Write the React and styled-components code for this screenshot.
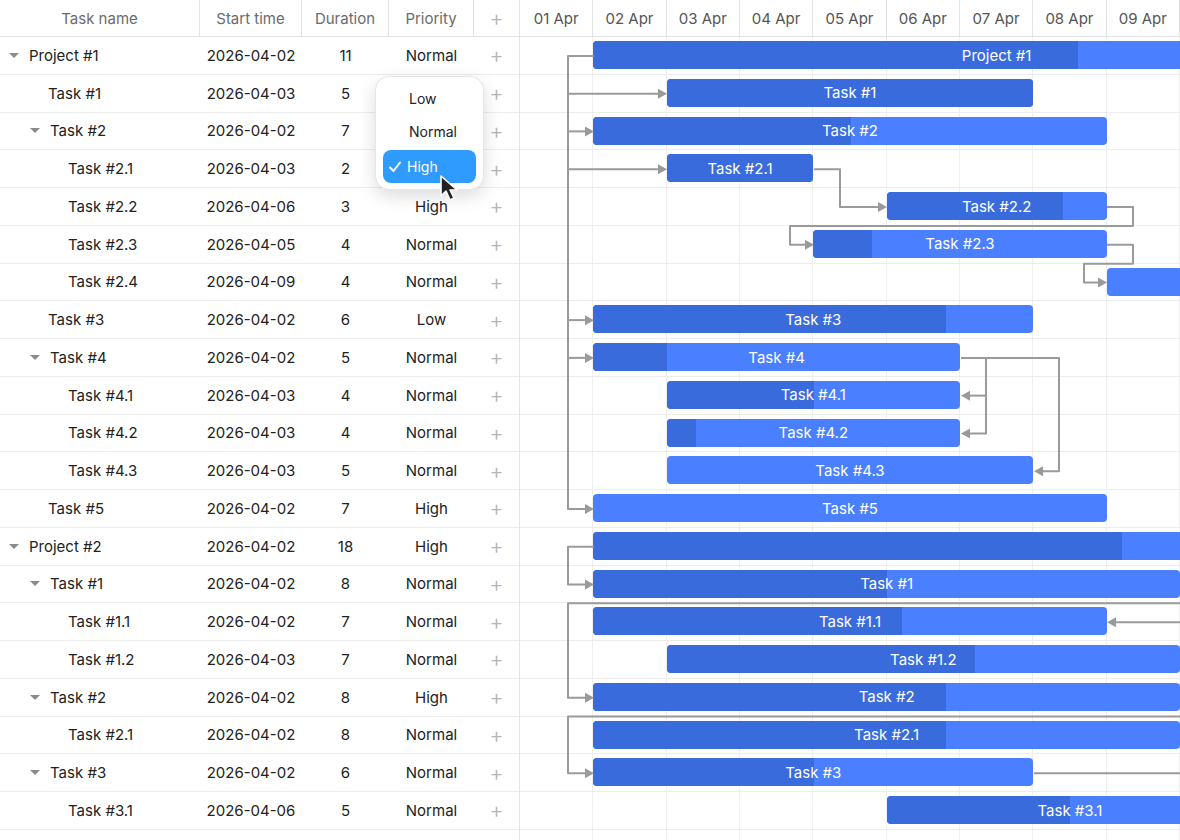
import React from "react";
import styled, { createGlobalStyle } from "styled-components";

const Global = createGlobalStyle`
  body { margin: 0; font-family: Inter, "Noto Sans", sans-serif; background: #fff; color: #222; }
`;

const DAY = 73.33;
const ROW = 37.75;
const HEAD = 37;
const dayX = (d) => (d - 1) * DAY;

const rows = [
  { name: "Project #1", lvl: 0, toggle: true, start: "2026-04-02", dur: 11, pr: "Normal", d: 2, prog: 1078 },
  { name: "Task #1", lvl: 1, start: "2026-04-03", dur: 5, pr: "", d: 3, prog: 1034 },
  { name: "Task #2", lvl: 1, toggle: true, start: "2026-04-02", dur: 7, pr: "", d: 2, prog: 851 },
  { name: "Task #2.1", lvl: 2, start: "2026-04-03", dur: 2, pr: "", d: 3, prog: 814 },
  { name: "Task #2.2", lvl: 2, start: "2026-04-06", dur: 3, pr: "High", d: 6, prog: 1063 },
  { name: "Task #2.3", lvl: 2, start: "2026-04-05", dur: 4, pr: "Normal", d: 5, prog: 872 },
  { name: "Task #2.4", lvl: 2, start: "2026-04-09", dur: 4, pr: "Normal", d: 9, prog: 0, nolabel: true },
  { name: "Task #3", lvl: 1, start: "2026-04-02", dur: 6, pr: "Low", d: 2, prog: 946 },
  { name: "Task #4", lvl: 1, toggle: true, start: "2026-04-02", dur: 5, pr: "Normal", d: 2, prog: 667 },
  { name: "Task #4.1", lvl: 2, start: "2026-04-03", dur: 4, pr: "Normal", d: 3, prog: 814 },
  { name: "Task #4.2", lvl: 2, start: "2026-04-03", dur: 4, pr: "Normal", d: 3, prog: 696 },
  { name: "Task #4.3", lvl: 2, start: "2026-04-03", dur: 5, pr: "Normal", d: 3, prog: 0 },
  { name: "Task #5", lvl: 1, start: "2026-04-02", dur: 7, pr: "High", d: 2, prog: 0 },
  { name: "Project #2", lvl: 0, toggle: true, start: "2026-04-02", dur: 18, pr: "High", d: 2, prog: 1122, nolabel: true },
  { name: "Task #1", lvl: 1, toggle: true, start: "2026-04-02", dur: 8, pr: "Normal", d: 2, prog: 887 },
  { name: "Task #1.1", lvl: 2, start: "2026-04-02", dur: 7, pr: "Normal", d: 2, prog: 902 },
  { name: "Task #1.2", lvl: 2, start: "2026-04-03", dur: 7, pr: "Normal", d: 3, prog: 975 },
  { name: "Task #2", lvl: 1, toggle: true, start: "2026-04-02", dur: 8, pr: "High", d: 2, prog: 946 },
  { name: "Task #2.1", lvl: 2, start: "2026-04-02", dur: 8, pr: "Normal", d: 2, prog: 946 },
  { name: "Task #3", lvl: 1, toggle: true, start: "2026-04-02", dur: 6, pr: "Normal", d: 2, prog: 814 },
  { name: "Task #3.1", lvl: 2, start: "2026-04-06", dur: 5, pr: "Normal", d: 6, prog: 1070 },
];

const days = ["01 Apr", "02 Apr", "03 Apr", "04 Apr", "05 Apr", "06 Apr", "07 Apr", "08 Apr", "09 Apr"];

const Page = styled.div`
  display: flex;
  width: 1180px;
  height: 840px;
  overflow: hidden;
  font-size: 15px;
`;

const Grid = styled.div`
  width: 520px;
  flex-shrink: 0;
  border-right: 1px solid #e3e3e3;
  box-sizing: border-box;
  position: relative;
`;

const Cols = "200px 102px 87px 85px 45px";

const HeadRow = styled.div`
  display: grid;
  grid-template-columns: ${Cols};
  height: ${HEAD}px;
  border-bottom: 1px solid #e3e3e3;
  box-sizing: border-box;
`;

const HeadCell = styled.div`
  display: flex;
  align-items: center;
  justify-content: center;
  color: #6b6b6b;
  border-right: ${(p) => (p.$last ? "none" : "1px solid #e3e3e3")};
`;

const Row = styled.div`
  display: grid;
  grid-template-columns: ${Cols};
  height: ${ROW}px;
  border-bottom: 1px solid #ececec;
  box-sizing: border-box;
`;

const Cell = styled.div`
  display: flex;
  align-items: center;
  justify-content: center;
  color: #222;
`;

const NameCell = styled.div`
  display: flex;
  align-items: center;
  padding-left: ${(p) => p.$pad}px;
  color: #222;
`;

const Caret = styled.span`
  width: 0;
  height: 0;
  border-left: 5px solid transparent;
  border-right: 5px solid transparent;
  border-top: 5px solid #8a8a8a;
  margin-right: 10px;
`;

const Plus = styled.span`
  color: #b5b5b5;
  font-size: 22px;
  font-weight: 300;
  line-height: 1;
`;

const Menu = styled.div`
  position: absolute;
  left: 375px;
  top: 76px;
  width: 109px;
  height: 114px;
  background: #fff;
  border-radius: 14px;
  border: 1px solid #e6e6e6;
  box-shadow: 0 6px 18px rgba(0, 0, 0, 0.14);
  box-sizing: border-box;
  padding: 5px 7px;
  display: flex;
  flex-direction: column;
  z-index: 3;
`;

const MenuItem = styled.div`
  height: 33px;
  display: flex;
  align-items: center;
  padding-left: ${(p) => (p.$sel ? "5px" : "26px")};
  gap: 5px;
  border-radius: 8px;
  background: ${(p) => (p.$sel ? "#2f9bff" : "transparent")};
  color: ${(p) => (p.$sel ? "#fff" : "#222")};
  font-size: 14px;
  margin-top: ${(p) => (p.$sel ? "2px" : "0")};
`;

const Chart = styled.div`
  flex: 1;
  position: relative;
  background-image: repeating-linear-gradient(
    to right,
    transparent 0,
    transparent ${DAY - 1}px,
    #efefef ${DAY - 1}px,
    #efefef ${DAY}px
  );
`;

const Scale = styled.div`
  display: flex;
  height: ${HEAD}px;
  border-bottom: 1px solid #e3e3e3;
  box-sizing: border-box;
  background: #fff;
`;

const ScaleCell = styled.div`
  width: ${DAY}px;
  flex-shrink: 0;
  display: flex;
  align-items: center;
  justify-content: center;
  color: #555;
  border-right: 1px solid #e3e3e3;
  box-sizing: border-box;
`;

const ChartRow = styled.div`
  height: ${ROW}px;
  border-bottom: 1px solid #ececec;
  box-sizing: border-box;
  position: relative;
`;

const Bar = styled.div`
  position: absolute;
  top: 4px;
  height: 28px;
  border-radius: 4px;
  background: #4a7fff;
  overflow: hidden;
  display: flex;
  align-items: center;
  justify-content: center;
  color: #fff;
  font-size: 15px;
`;

const Progress = styled.div`
  position: absolute;
  left: 0;
  top: 0;
  bottom: 0;
  background: #3a6bdc;
`;

const Label = styled.span`
  position: relative;
`;

const Links = styled.svg`
  position: absolute;
  left: 0;
  top: 0;
  pointer-events: none;
`;

const y = (i) => HEAD + i * ROW + ROW / 2;
const X = (px) => px - 520;

const links = [
  // project 1 fan
  `M${X(594)} ${y(0)} H${X(568)} V${y(12)} H${X(588)}`,
  `M${X(568)} ${y(1)} H${X(661)}`,
  `M${X(568)} ${y(2)} H${X(588)}`,
  `M${X(568)} ${y(3)} H${X(661)}`,
  `M${X(568)} ${y(7)} H${X(588)}`,
  `M${X(568)} ${y(8)} H${X(588)}`,
  `M${X(814)} ${y(3)} H${X(840)} V${y(4)} H${X(881)}`,
  `M${X(1107)} ${y(4)} H${X(1133)} V${y(4) + 19} H${X(790)} V${y(5)} H${X(808)}`,
  `M${X(1107)} ${y(5)} H${X(1133)} V${y(5) + 19} H${X(1084)} V${y(6)} H${X(1101)}`,
  `M${X(961)} ${y(8)} H${X(986)} V${y(10)} H${X(967)}`,
  `M${X(986)} ${y(9)} H${X(967)}`,
  `M${X(961)} ${y(8)} H${X(1059)} V${y(11)} H${X(1040)}`,
  `M${X(594)} ${y(13)} H${X(568)} V${y(14)} H${X(588)}`,
  `M${X(1180)} ${y(15) - 19} H${X(568)} V${y(17)} H${X(588)}`,
  `M${X(1180)} ${y(15)} H${X(1113)}`,
  `M${X(1180)} ${y(18) - 19} H${X(568)} V${y(19)} H${X(588)}`,
  `M${X(1034)} ${y(19)} H${X(1180)}`,
];

const arrows = [
  [667, 1, 1], [594, 2, 1], [667, 3, 1], [594, 7, 1], [594, 8, 1], [594, 12, 1],
  [887, 4, 1], [814, 5, 1], [1107, 6, 1], [961, 9, -1], [961, 10, -1], [1034, 11, -1],
  [594, 14, 1], [594, 17, 1], [1107, 15, -1], [594, 19, 1],
];

const Cursor = () => (
  <svg width="26" height="30" viewBox="0 0 26 30" style={{ position: "absolute", left: 439, top: 174, zIndex: 4 }}>
    <path d="M2 2 L2 22 L7 17 L11 26 L15 24 L11 16 L18 16 Z" fill="#222" stroke="#fff" strokeWidth="1.6" strokeLinejoin="round" />
  </svg>
);

export default function App() {
  return (
    <Page>
      <Global />
      <Grid>
        <HeadRow>
          <HeadCell>Task name</HeadCell>
          <HeadCell>Start time</HeadCell>
          <HeadCell>Duration</HeadCell>
          <HeadCell>Priority</HeadCell>
          <HeadCell $last><Plus>+</Plus></HeadCell>
        </HeadRow>
        {rows.map((r, i) => {
          const pad = r.lvl === 0 ? 9 : r.lvl === 1 ? (r.toggle ? 30 : 48) : 68;
          return (
            <Row key={i}>
              <NameCell $pad={pad}>
                {r.toggle && <Caret />}
                {r.name}
              </NameCell>
              <Cell>{r.start}</Cell>
              <Cell>{r.dur}</Cell>
              <Cell>{r.pr}</Cell>
              <Cell><Plus>+</Plus></Cell>
            </Row>
          );
        })}
        <Menu>
          <MenuItem>Low</MenuItem>
          <MenuItem>Normal</MenuItem>
          <MenuItem $sel>
            <svg width="14" height="14" viewBox="0 0 14 14">
              <path d="M2 7.5 L5.5 11 L12 2.5" fill="none" stroke="#fff" strokeWidth="2" strokeLinecap="round" strokeLinejoin="round" />
            </svg>
            High
          </MenuItem>
        </Menu>
        <Cursor />
      </Grid>
      <Chart>
        <Scale>
          {days.map((d) => (
            <ScaleCell key={d}>{d}</ScaleCell>
          ))}
        </Scale>
        {rows.map((r, i) => {
          const left = dayX(r.d);
          const width = r.dur * DAY;
          const prog = r.prog ? r.prog - 520 - left : 0;
          return (
            <ChartRow key={i}>
              <Bar style={{ left, width }}>
                {prog > 0 && <Progress style={{ width: prog }} />}
                {!r.nolabel && <Label>{r.name}</Label>}
              </Bar>
            </ChartRow>
          );
        })}
        <Links width="660" height="840">
          {links.map((d, i) => (
            <path key={i} d={d} fill="none" stroke="#9a9a9a" strokeWidth="2" strokeLinejoin="round" />
          ))}
          {arrows.map(([x, r, dir], i) => {
            const ax = X(x);
            const ay = y(r);
            const p = dir > 0
              ? `${ax},${ay} ${ax - 9},${ay - 5} ${ax - 9},${ay + 5}`
              : `${ax},${ay} ${ax + 9},${ay - 5} ${ax + 9},${ay + 5}`;
            return <polygon key={i} points={p} fill="#9a9a9a" />;
          })}
        </Links>
      </Chart>
    </Page>
  );
}
